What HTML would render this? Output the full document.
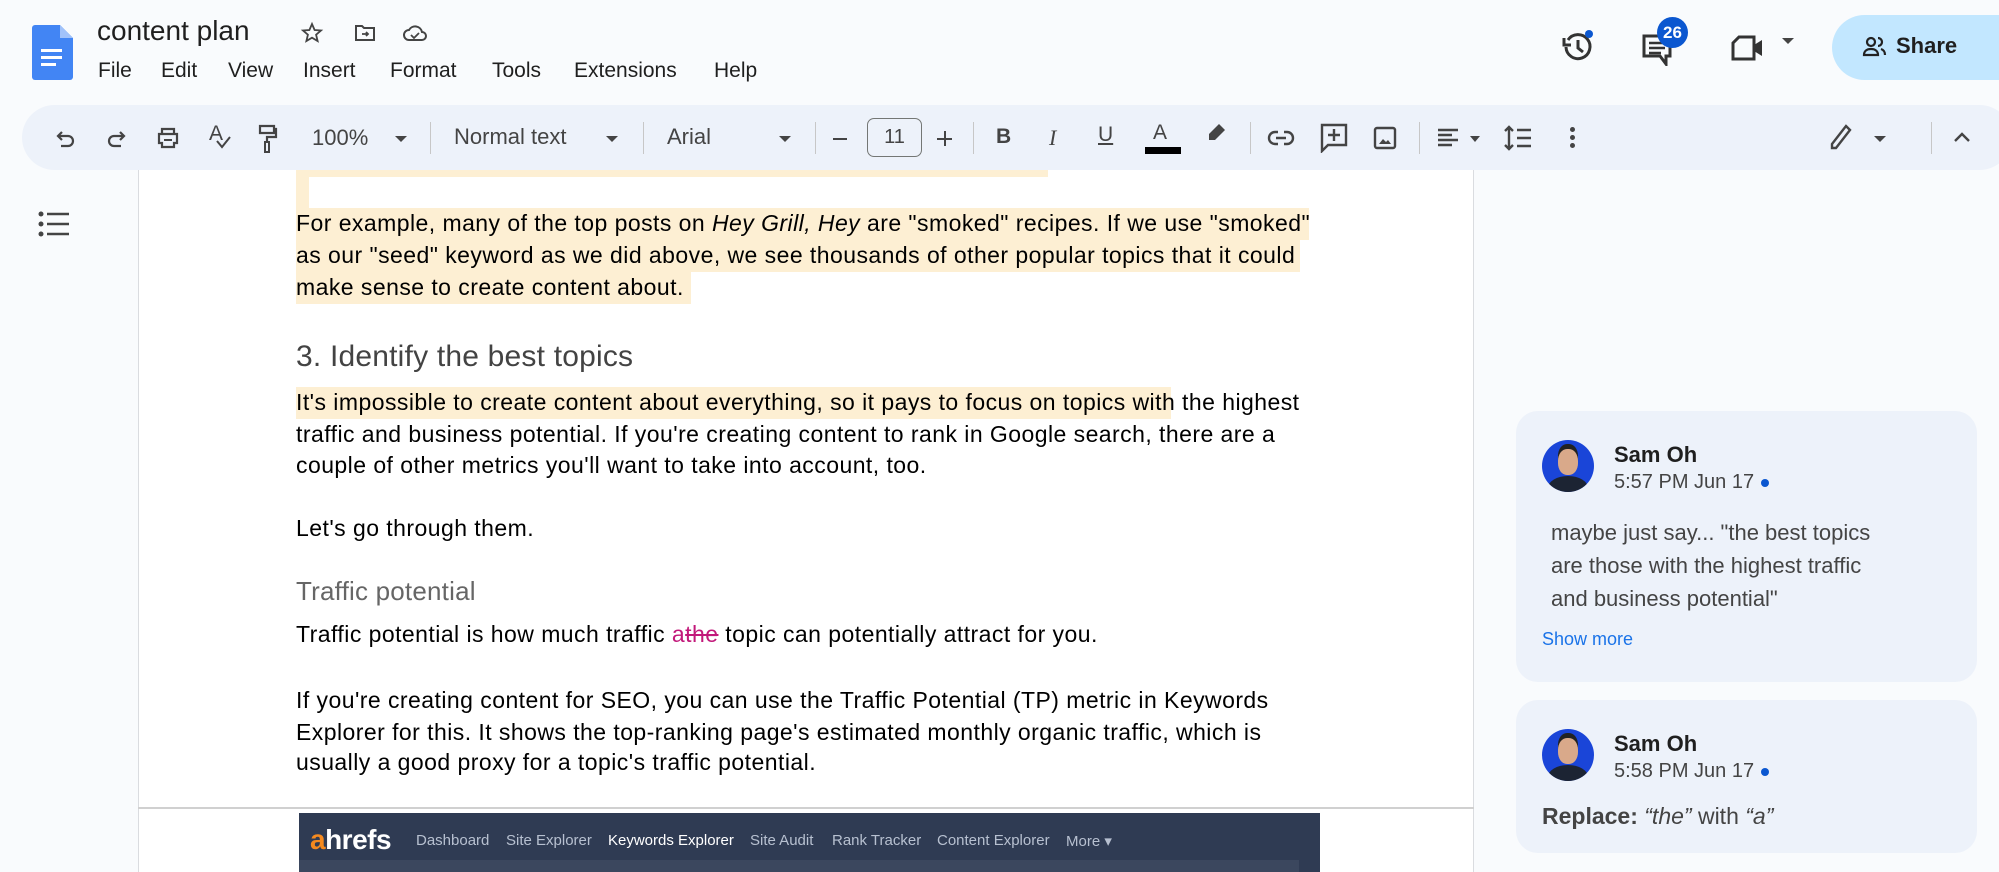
<!DOCTYPE html>
<html><head><meta charset="utf-8"><style>
*{margin:0;padding:0;box-sizing:border-box}
body{width:1999px;height:872px;overflow:hidden;background:#f9fbfd;font-family:"Liberation Sans",Arial,sans-serif;position:relative;color:#1f1f1f}
.a{position:absolute;white-space:nowrap}
.menu span{position:absolute;top:59px;font-size:21px;color:#1f1f1f}
.tb{position:absolute;left:22px;top:105px;width:1990px;height:65px;background:#edf2fa;border-radius:33px}
.ic{position:absolute}
.div{position:absolute;top:122px;width:1px;height:32px;background:#c7c7c7}
.page{position:absolute;left:138px;top:170px;width:1336px;height:702px;background:#fff;border-left:1px solid #dadce0;border-right:1px solid #dadce0}
.t{position:absolute;left:296px;font-size:23px;letter-spacing:0.45px;color:#000;white-space:nowrap;line-height:32px}
.hl{position:absolute;background:#fdefd3}
.card{position:absolute;left:1516px;width:461px;background:#edf2fa;border-radius:22px}
.av{position:absolute;width:52px;height:52px;border-radius:50%;background:#1a45d8;overflow:hidden}
.av:before{content:"";position:absolute;left:16px;top:9px;width:20px;height:26px;border-radius:45%;background:#d9a98a;box-shadow:0 -5px 0 #222}
.av:after{content:"";position:absolute;left:6px;top:36px;width:40px;height:24px;border-radius:50% 50% 0 0;background:#1c2433}
.nm{position:absolute;font-size:22px;font-weight:bold;color:#1f1f1f}
.tm{position:absolute;font-size:20px;color:#444}
.dot{display:inline-block;width:8px;height:8px;border-radius:50%;background:#0b57d0;margin-left:7px;vertical-align:middle}
</style></head><body>

<svg class="ic" style="left:32px;top:25px" width="41" height="55" viewBox="0 0 41 55"><path d="M3 0h25l13 13v39a3 3 0 0 1-3 3H3a3 3 0 0 1-3-3V3a3 3 0 0 1 3-3z" fill="#4285f4"/><path d="M28 0v13h13z" fill="#a1c2fa"/><rect x="9" y="24" width="21" height="3" fill="#fff"/><rect x="9" y="31" width="21" height="3" fill="#fff"/><rect x="9" y="38" width="15" height="3" fill="#fff"/></svg>
<div class="a" style="left:97px;top:15px;font-size:28px;color:#1f1f1f">content plan</div>
<svg class="ic" style="left:300px;top:21px" width="24" height="24" viewBox="0 0 24 24"><path d="M12 3l2.6 6 6.4.5-4.9 4.2 1.5 6.3L12 16.7 6.4 20l1.5-6.3L3 9.5 9.4 9z" fill="none" stroke="#444" stroke-width="1.8"/></svg>
<svg class="ic" style="left:353px;top:21px" width="24" height="24" viewBox="0 0 24 24"><path d="M3 5h6l2 2h10v12H3z" fill="none" stroke="#444" stroke-width="2"/><path d="M9 13h6m-2-2l2 2-2 2" stroke="#444" stroke-width="1.8" fill="none"/></svg>
<svg class="ic" style="left:402px;top:21px" width="26" height="24" viewBox="0 0 26 24"><path d="M7 19a5 5 0 0 1 0-10 7 7 0 0 1 13 2 4 4 0 0 1 0 8z" fill="none" stroke="#444" stroke-width="2"/><path d="M9 14l3 3 5-5" fill="none" stroke="#444" stroke-width="1.8"/></svg>
<div class="menu"><span style="left:98px">File</span><span style="left:161px">Edit</span><span style="left:228px">View</span><span style="left:303px">Insert</span><span style="left:390px">Format</span><span style="left:492px">Tools</span><span style="left:574px">Extensions</span><span style="left:714px">Help</span></div>

<svg class="ic" style="left:1561px;top:30px" width="34" height="34" viewBox="0 0 34 34"><path d="M7 10A12 12 0 1 1 5 17" fill="none" stroke="#333" stroke-width="3"/><path d="M3 8v7h7" fill="none" stroke="#333" stroke-width="3"/><path d="M17 10v8l5 4" fill="none" stroke="#333" stroke-width="3"/><circle cx="28" cy="4" r="4" fill="#0b57d0"/></svg>
<svg class="ic" style="left:1642px;top:34px" width="36" height="32" viewBox="0 0 36 32"><path d="M2 2h26v20h-4v8l-6-8H2z" fill="none" stroke="#333" stroke-width="3"/><path d="M7 9h16M7 14h16M7 19h12" stroke="#333" stroke-width="2.5"/></svg>
<div class="a" style="left:1657px;top:17px;width:31px;height:31px;border-radius:50%;background:#0b57d0;color:#fff;font-size:17px;font-weight:bold;text-align:center;line-height:31px">26</div>
<svg class="ic" style="left:1730px;top:34px" width="36" height="28" viewBox="0 0 36 28"><path d="M9 3h15v22H3V9z" fill="none" stroke="#333" stroke-width="3"/><path d="M24 11l8-5v16l-8-5z" fill="#333"/></svg>
<div class="a" style="left:1782px;top:38px;width:0;height:0;border-left:6px solid transparent;border-right:6px solid transparent;border-top:6px solid #444"></div>
<div class="a" style="left:1832px;top:15px;width:200px;height:65px;border-radius:33px;background:#c2e7ff"></div>
<svg class="ic" style="left:1862px;top:35px" width="26" height="24" viewBox="0 0 26 24"><circle cx="9" cy="7" r="4" fill="none" stroke="#222" stroke-width="2.2"/><path d="M2 20c0-4 3-6 7-6s7 2 7 6z" fill="none" stroke="#222" stroke-width="2.2"/><path d="M16 3a4 4 0 0 1 0 8M19 14c3 1 4 3 4 6" fill="none" stroke="#222" stroke-width="2.2"/></svg>
<div class="a" style="left:1896px;top:33px;font-size:22px;font-weight:bold;color:#1f1f1f">Share</div>

<div class="tb"></div>
<svg class="ic" style="left:54px;top:128px" width="22" height="22" viewBox="0 0 22 22"><path d="M5 8h9a5 5 0 0 1 0 10H7" fill="none" stroke="#444" stroke-width="2.2"/><path d="M8 4L4 8l4 4" fill="none" stroke="#444" stroke-width="2.2"/></svg>
<svg class="ic" style="left:106px;top:128px" width="22" height="22" viewBox="0 0 22 22"><path d="M17 8H8a5 5 0 0 0 0 10h7" fill="none" stroke="#444" stroke-width="2.2"/><path d="M14 4l4 4-4 4" fill="none" stroke="#444" stroke-width="2.2"/></svg>
<svg class="ic" style="left:156px;top:126px" width="24" height="24" viewBox="0 0 24 24"><path d="M6 3h12v5H6zM3 8h18v9h-3v4H6v-4H3z" fill="none" stroke="#444" stroke-width="2.2"/><path d="M8 14h8" stroke="#444" stroke-width="2"/></svg>
<div class="a" style="left:209px;top:122px;font-size:21px;color:#444">A</div>
<svg class="ic" style="left:215px;top:136px" width="16" height="14" viewBox="0 0 16 14"><path d="M2 5l5 6 8-10" fill="none" stroke="#444" stroke-width="2"/></svg>
<svg class="ic" style="left:258px;top:124px" width="20" height="30" viewBox="0 0 20 30"><path d="M2 2h14v7H2zM16 5h2v8H9v5" fill="none" stroke="#444" stroke-width="2.2"/><rect x="7" y="18" width="4" height="10" fill="none" stroke="#444" stroke-width="2"/></svg>
<div class="a" style="left:312px;top:125px;font-size:22px;color:#444">100%</div>
<div class="a" style="left:395px;top:136px;border-left:6px solid transparent;border-right:6px solid transparent;border-top:6px solid #444"></div>
<div class="div" style="left:430px"></div>
<div class="a" style="left:454px;top:124px;font-size:22px;color:#444">Normal text</div>
<div class="a" style="left:606px;top:136px;border-left:6px solid transparent;border-right:6px solid transparent;border-top:6px solid #444"></div>
<div class="div" style="left:643px"></div>
<div class="a" style="left:667px;top:124px;font-size:22px;color:#444">Arial</div>
<div class="a" style="left:779px;top:136px;border-left:6px solid transparent;border-right:6px solid transparent;border-top:6px solid #444"></div>
<div class="div" style="left:815px"></div>
<div class="a" style="left:833px;top:138px;width:14px;height:2px;background:#444"></div>
<div class="a" style="left:867px;top:118px;width:55px;height:39px;border:1.5px solid #747775;border-radius:7px;text-align:center;font-size:20px;line-height:36px;color:#444">11</div>
<div class="a" style="left:937px;top:138px;width:15px;height:2px;background:#444"></div>
<div class="a" style="left:943.5px;top:131px;width:2px;height:15px;background:#444"></div>
<div class="div" style="left:973px"></div>
<div class="a" style="left:996px;top:125px;font-size:21px;font-weight:bold;color:#444">B</div>
<div class="a" style="left:1049px;top:125px;font-size:22px;font-style:italic;font-family:'Liberation Serif',serif;color:#444">I</div>
<div class="a" style="left:1098px;top:123px;font-size:21px;color:#444;text-decoration:underline">U</div>
<div class="a" style="left:1153px;top:121px;font-size:21px;color:#444">A</div>
<div class="a" style="left:1145px;top:147px;width:36px;height:7px;background:#000"></div>
<svg class="ic" style="left:1205px;top:122px" width="22" height="24" viewBox="0 0 22 24"><path d="M14 2l6 6-10 10H4v-6z" fill="#444"/></svg>
<div class="div" style="left:1250px"></div>
<svg class="ic" style="left:1267px;top:128px" width="28" height="20" viewBox="0 0 28 20"><path d="M11 4H8a6 6 0 0 0 0 12h3M17 4h3a6 6 0 0 1 0 12h-3M9 10h10" fill="none" stroke="#444" stroke-width="2.4"/></svg>
<svg class="ic" style="left:1320px;top:123px" width="28" height="30" viewBox="0 0 28 30"><path d="M2 2h24v20H8l-6 6z" fill="none" stroke="#444" stroke-width="2.4"/><path d="M14 6v12M8 12h12" stroke="#444" stroke-width="2.4"/></svg>
<svg class="ic" style="left:1373px;top:126px" width="24" height="24" viewBox="0 0 24 24"><rect x="2" y="2" width="20" height="20" rx="2" fill="none" stroke="#444" stroke-width="2.4"/><path d="M6 18l4-5 3 3 2-2 3 4z" fill="#444"/></svg>
<div class="div" style="left:1419px"></div>
<svg class="ic" style="left:1436px;top:127px" width="24" height="22" viewBox="0 0 24 22"><path d="M2 3h20M2 8h14M2 13h20M2 18h14" stroke="#444" stroke-width="2.4"/></svg>
<div class="a" style="left:1470px;top:136px;border-left:5px solid transparent;border-right:5px solid transparent;border-top:6px solid #444"></div>
<svg class="ic" style="left:1504px;top:125px" width="28" height="26" viewBox="0 0 28 26"><path d="M5 2v22M1 6l4-4 4 4M1 20l4 4 4-4M13 5h14M13 13h14M13 21h14" fill="none" stroke="#444" stroke-width="2.4"/></svg>
<div class="a" style="left:1570px;top:127px;width:5px;height:5px;border-radius:50%;background:#444;box-shadow:0 8px 0 #444,0 16px 0 #444"></div>
<svg class="ic" style="left:1828px;top:124px" width="24" height="28" viewBox="0 0 24 28"><path d="M18 2l4 4L8 24H4v-4z" fill="none" stroke="#444" stroke-width="2.4"/></svg>
<div class="a" style="left:1874px;top:136px;border-left:6px solid transparent;border-right:6px solid transparent;border-top:6px solid #444"></div>
<div class="div" style="left:1931px"></div>
<svg class="ic" style="left:1953px;top:130px" width="18" height="14" viewBox="0 0 18 14"><path d="M2 11l7-7 7 7" fill="none" stroke="#444" stroke-width="2.4"/></svg>

<svg class="ic" style="left:38px;top:210px" width="32" height="28" viewBox="0 0 32 28"><circle cx="3" cy="4" r="2.5" fill="#444"/><circle cx="3" cy="14" r="2.5" fill="#444"/><circle cx="3" cy="24" r="2.5" fill="#444"/><path d="M9 4h22M9 14h22M9 24h22" stroke="#444" stroke-width="2.6"/></svg>

<div class="page"></div>
<div class="hl" style="left:296px;top:170px;width:752px;height:38px"></div>
<div class="a" style="left:309px;top:177px;width:739px;height:31px;background:#fff"></div>
<div class="hl" style="left:296px;top:208px;width:1013px;height:32px"></div>
<div class="hl" style="left:296px;top:240px;width:1004px;height:32px"></div>
<div class="hl" style="left:296px;top:272px;width:395px;height:32px"></div>
<div class="hl" style="left:296px;top:387px;width:875px;height:32px"></div>

<div class="t" style="top:207px">For example, many of the top posts on <i>Hey Grill, Hey</i> are "smoked" recipes. If we use "smoked"</div>
<div class="t" style="top:239px">as our "seed" keyword as we did above, we see thousands of other popular topics that it could</div>
<div class="t" style="top:271px">make sense to create content about.</div>
<div class="t" style="top:337px;font-size:30px;letter-spacing:0.2px;color:#434343;line-height:40px">3. Identify the best topics</div>
<div class="t" style="top:386px">It's impossible to create content about everything, so it pays to focus on topics with the highest</div>
<div class="t" style="top:418px">traffic and business potential. If you're creating content to rank in Google search, there are a</div>
<div class="t" style="top:449px">couple of other metrics you'll want to take into account, too.</div>
<div class="t" style="top:512px">Let's go through them.</div>
<div class="t" style="top:575px;font-size:26px;letter-spacing:0.2px;color:#666">Traffic potential</div>
<div class="t" style="top:618px">Traffic potential is how much traffic <span style="color:#c2187a">a<s>the</s></span> topic can potentially attract for you.</div>
<div class="t" style="top:684px">If you're creating content for SEO, you can use the Traffic Potential (TP) metric in Keywords</div>
<div class="t" style="top:716px">Explorer for this. It shows the top-ranking page's estimated monthly organic traffic, which is</div>
<div class="t" style="top:746px">usually a good proxy for a topic's traffic potential.</div>

<div class="a" style="left:138px;top:807px;width:1336px;height:2px;background:#d0d0d0"></div>
<div class="a" style="left:299px;top:813px;width:1021px;height:59px;background:#2f3b53"></div>
<div class="a" style="left:299px;top:860px;width:1000px;height:12px;background:#3b475e"></div>
<div class="a" style="left:310px;top:824px;font-size:28px;font-weight:bold;color:#fff;letter-spacing:-0.5px"><span style="color:#f58a1f">a</span>hrefs</div>
<div class="a" style="left:416px;top:832px;font-size:15px;color:#b7c0d0">Dashboard</div>
<div class="a" style="left:506px;top:832px;font-size:15px;color:#b7c0d0">Site Explorer</div>
<div class="a" style="left:608px;top:832px;font-size:15px;color:#fff">Keywords Explorer</div>
<div class="a" style="left:750px;top:832px;font-size:15px;color:#b7c0d0">Site Audit</div>
<div class="a" style="left:832px;top:832px;font-size:15px;color:#b7c0d0">Rank Tracker</div>
<div class="a" style="left:937px;top:832px;font-size:15px;color:#b7c0d0">Content Explorer</div>
<div class="a" style="left:1066px;top:832px;font-size:15px;color:#b7c0d0">More ▾</div>

<div class="card" style="top:411px;height:271px"></div>
<div class="av" style="left:1542px;top:440px"></div>
<div class="nm" style="left:1614px;top:442px">Sam Oh</div>
<div class="tm" style="left:1614px;top:471px">5:57 PM Jun 17<span class="dot"></span></div>
<div class="a" style="left:1551px;top:516px;font-size:22px;color:#444;line-height:33px">maybe just say... "the best topics<br>are those with the highest traffic<br>and business potential"</div>
<div class="a" style="left:1542px;top:629px;font-size:18px;color:#1a73e8">Show more</div>

<div class="card" style="top:700px;height:153px"></div>
<div class="av" style="left:1542px;top:729px"></div>
<div class="nm" style="left:1614px;top:731px">Sam Oh</div>
<div class="tm" style="left:1614px;top:760px">5:58 PM Jun 17<span class="dot"></span></div>
<div class="a" style="left:1542px;top:803px;font-size:23px;color:#444"><b>Replace:</b> <i>“the”</i> with <i>“a”</i></div>
</body></html>
